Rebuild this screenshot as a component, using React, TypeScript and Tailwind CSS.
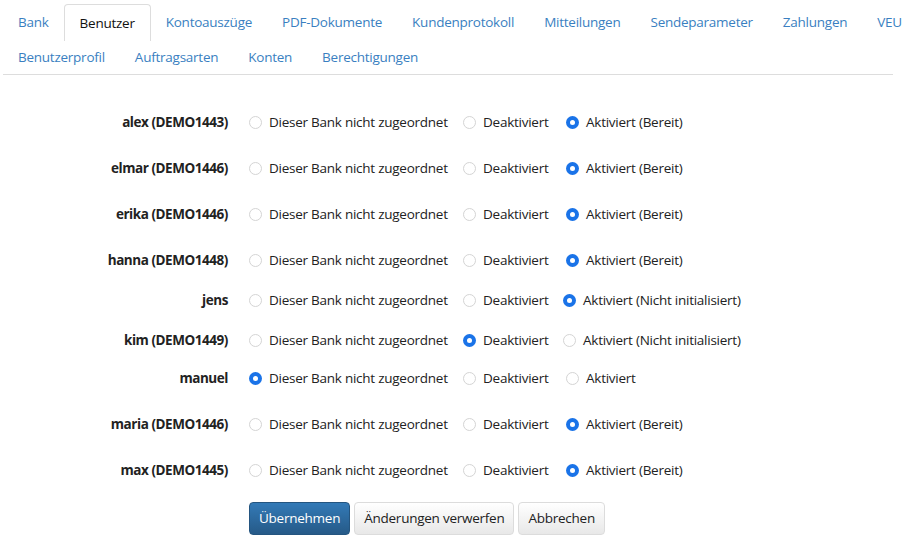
import React from "react";

const font = { fontFamily: '"Open Sans", "Liberation Sans", sans-serif' };

const tabsTop = ["Bank", "Benutzer", "Kontoauszüge", "PDF-Dokumente", "Kundenprotokoll", "Mitteilungen", "Sendeparameter", "Zahlungen", "VEU"];
const tabsBottom = ["Benutzerprofil", "Auftragsarten", "Konten", "Berechtigungen"];

type Row = { name: string; sel: 0 | 1 | 2; third: string; gap: string; narrow?: boolean };

const rows: Row[] = [
  { name: "alex (DEMO1443)", sel: 2, third: "Aktiviert (Bereit)", gap: "mt-0" },
  { name: "elmar (DEMO1446)", sel: 2, third: "Aktiviert (Bereit)", gap: "mt-[22px]" },
  { name: "erika (DEMO1446)", sel: 2, third: "Aktiviert (Bereit)", gap: "mt-[22px]" },
  { name: "hanna (DEMO1448)", sel: 2, third: "Aktiviert (Bereit)", gap: "mt-[22px]" },
  { name: "jens", sel: 2, third: "Aktiviert (Nicht initialisiert)", gap: "mt-[16px]", narrow: true },
  { name: "kim (DEMO1449)", sel: 1, third: "Aktiviert (Nicht initialisiert)", gap: "mt-[16px]", narrow: true },
  { name: "manuel", sel: 0, third: "Aktiviert", gap: "mt-[14px]" },
  { name: "maria (DEMO1446)", sel: 2, third: "Aktiviert (Bereit)", gap: "mt-[22px]" },
  { name: "max (DEMO1445)", sel: 2, third: "Aktiviert (Bereit)", gap: "mt-[22px]" },
];

function Radio({ checked }: { checked: boolean }) {
  return checked ? (
    <span className="w-[13px] h-[13px] rounded-full bg-[#1a73e8] flex items-center justify-center shrink-0">
      <span className="w-[5px] h-[5px] rounded-full bg-white" />
    </span>
  ) : (
    <span className="w-[13px] h-[13px] rounded-full border border-[#d4d4d4] bg-white shrink-0" />
  );
}

function Option({ checked, label, className }: { checked: boolean; label: string; className?: string }) {
  return (
    <label className={`flex items-center gap-[7px] whitespace-nowrap ${className ?? ""}`}>
      <Radio checked={checked} />
      <span>{label}</span>
    </label>
  );
}

export default function App() {
  return (
    <div className="w-[902px] h-[543px] overflow-hidden bg-white text-[13.5px] tracking-[-0.25px] text-[#222]" style={font}>
      <div className="pl-[3px] pr-[9px]">
        <div className="border-b border-[#dddddd] pt-[4px]">
          <div className="flex h-[36px]">
            {tabsTop.map((t) =>
              t === "Benutzer" ? (
                <div key={t} className="px-[15px] flex items-center border border-b-0 border-[#dddddd] rounded-t-[4px] bg-white text-[#111] mb-[-1px] h-[37px]">
                  {t}
                </div>
              ) : (
                <div key={t} className="px-[15px] flex items-center text-[#3a7fc1] whitespace-nowrap">
                  {t}
                </div>
              )
            )}
          </div>
          <div className="flex h-[34px]">
            {tabsBottom.map((t) => (
              <div key={t} className="px-[15px] flex items-center text-[#3a7fc1]">
                {t}
              </div>
            ))}
          </div>
        </div>
      </div>

      <div className="pt-[35px]">
        {rows.map((r) => (
          <div key={r.name} className={`flex items-center h-[24px] ${r.gap}`}>
            <div className="w-[228px] text-right font-bold tracking-[-0.45px] text-[#222]">{r.name}</div>
            <div className="flex items-center pl-[21px]">
              <Option checked={r.sel === 0} label="Dieser Bank nicht zugeordnet" className="w-[214px]" />
              <Option checked={r.sel === 1} label="Deaktiviert" className={r.narrow ? "w-[100px]" : "w-[103px]"} />
              <Option checked={r.sel === 2} label={r.third} />
            </div>
          </div>
        ))}

        <div className="flex gap-[4px] pl-[249px] mt-[20px]">
          <button className="h-[33px] px-[9px] rounded-[4px] border border-[#245580] text-white bg-gradient-to-b from-[#337ab7] to-[#265a88]">
            Übernehmen
          </button>
          <button className="h-[33px] px-[9px] rounded-[4px] border border-[#dcdcdc] text-[#222] bg-gradient-to-b from-white to-[#e8e8e8]">
            Änderungen verwerfen
          </button>
          <button className="h-[33px] px-[9px] rounded-[4px] border border-[#dcdcdc] text-[#222] bg-gradient-to-b from-white to-[#e8e8e8]">
            Abbrechen
          </button>
        </div>
      </div>
    </div>
  );
}
